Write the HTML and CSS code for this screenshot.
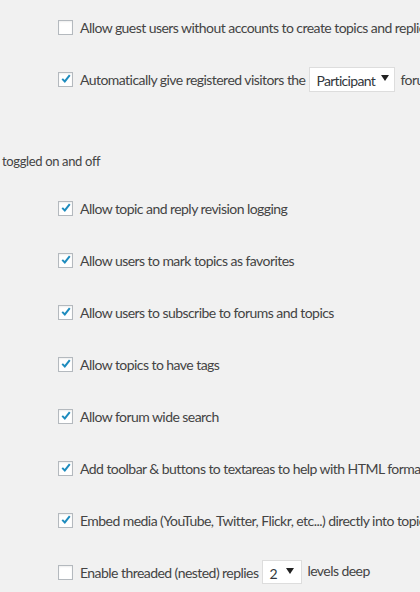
FILE: index.html
```html
<!DOCTYPE html>
<html>
<head>
<meta charset="utf-8">
<link rel="stylesheet" href="styles.css">
</head>
<body>
<div class="page">
  <div class="group first">
    <label class="row"><span class="cb"></span><span class="txt">Allow guest users without accounts to create topics and replies</span></label>
    <label class="row"><span class="cb"><svg viewBox="0 0 14 14" width="14" height="14"><path d="M2.6 6.9 L5.6 9.9 L11.4 2.6" fill="none" stroke="#1e8cbe" stroke-width="2.3"/></svg></span><span class="txt">Automatically give registered visitors the</span><span class="select wide"><span class="val">Participant</span><svg class="arrow" viewBox="0 0 8 6" width="8" height="6"><path d="M0 0 H8 L4 6 Z" fill="#222"/></svg></span><span class="txt after">forum role</span></label>
  </div>
  <p class="desc">toggled on and off</p>
  <div class="group">
    <label class="row"><span class="cb"><svg viewBox="0 0 14 14" width="14" height="14"><path d="M2.6 6.9 L5.6 9.9 L11.4 2.6" fill="none" stroke="#1e8cbe" stroke-width="2.3"/></svg></span><span class="txt">Allow topic and reply revision logging</span></label>
    <label class="row"><span class="cb"><svg viewBox="0 0 14 14" width="14" height="14"><path d="M2.6 6.9 L5.6 9.9 L11.4 2.6" fill="none" stroke="#1e8cbe" stroke-width="2.3"/></svg></span><span class="txt">Allow users to mark topics as favorites</span></label>
    <label class="row"><span class="cb"><svg viewBox="0 0 14 14" width="14" height="14"><path d="M2.6 6.9 L5.6 9.9 L11.4 2.6" fill="none" stroke="#1e8cbe" stroke-width="2.3"/></svg></span><span class="txt">Allow users to subscribe to forums and topics</span></label>
    <label class="row"><span class="cb"><svg viewBox="0 0 14 14" width="14" height="14"><path d="M2.6 6.9 L5.6 9.9 L11.4 2.6" fill="none" stroke="#1e8cbe" stroke-width="2.3"/></svg></span><span class="txt">Allow topics to have tags</span></label>
    <label class="row"><span class="cb"><svg viewBox="0 0 14 14" width="14" height="14"><path d="M2.6 6.9 L5.6 9.9 L11.4 2.6" fill="none" stroke="#1e8cbe" stroke-width="2.3"/></svg></span><span class="txt">Allow forum wide search</span></label>
    <label class="row"><span class="cb"><svg viewBox="0 0 14 14" width="14" height="14"><path d="M2.6 6.9 L5.6 9.9 L11.4 2.6" fill="none" stroke="#1e8cbe" stroke-width="2.3"/></svg></span><span class="txt">Add toolbar &amp; buttons to textareas to help with HTML formatting</span></label>
    <label class="row"><span class="cb"><svg viewBox="0 0 14 14" width="14" height="14"><path d="M2.6 6.9 L5.6 9.9 L11.4 2.6" fill="none" stroke="#1e8cbe" stroke-width="2.3"/></svg></span><span class="txt">Embed media (YouTube, Twitter, Flickr, etc...) directly into topics and replies</span></label>
    <label class="row"><span class="cb"></span><span class="txt">Enable threaded (nested) replies</span><span class="select narrow"><span class="val">2</span><svg class="arrow" viewBox="0 0 8 6" width="8" height="6"><path d="M0 0 H8 L4 6 Z" fill="#222"/></svg></span><span class="txt after raised">levels deep</span></label>
  </div>
</div>
</body>
</html>
```
FILE: styles.css
```css
html, body {
  margin: 0;
  padding: 0;
  background: #f1f1f1;
  overflow: hidden;
}
body {
  font-family: Lato, "Open Sans", sans-serif;
  font-size: 14px;
  letter-spacing: -0.55px;
  color: #444;
  width: 420px;
  height: 592px;
}
.page {
  white-space: nowrap;
}
.group.first {
  padding-top: 1px;
}
.row {
  display: flex;
  align-items: center;
  height: 52px;
  padding-left: 58px;
}
.cb {
  box-sizing: border-box;
  width: 15px;
  height: 15px;
  border: 1px solid #b4b9be;
  background: #fff;
  flex: none;
  margin-right: 7px;
  display: flex;
  align-items: center;
  justify-content: center;
  box-shadow: inset 0 1px 2px rgba(0,0,0,0.07);
}
.cb svg {
  display: block;
  width: 12px;
  height: 12px;
}
.select {
  box-sizing: border-box;
  display: flex;
  align-items: center;
  justify-content: space-between;
  background: #fff;
  border: 1px solid #ddd;
  padding: 3px 5px 0 6px;
  margin-left: 4px;
  color: #32373c;
  letter-spacing: -0.7px;
  flex: none;
}
.select.wide {
  width: 86px;
  height: 25px;
}
.select.narrow {
  width: 40px;
  height: 24px;
  padding-right: 7px;
  margin-left: 4px;
}
.arrow {
  display: block;
  flex: none;
  margin-top: -5px;
}
.after {
  margin-left: 5px;
}
.raised {
  margin-top: -3px;
}
.desc {
  margin: 46px 0 11px 2px;
  line-height: 20px;
  font-size: 13px;
  letter-spacing: -0.35px;
}
```
